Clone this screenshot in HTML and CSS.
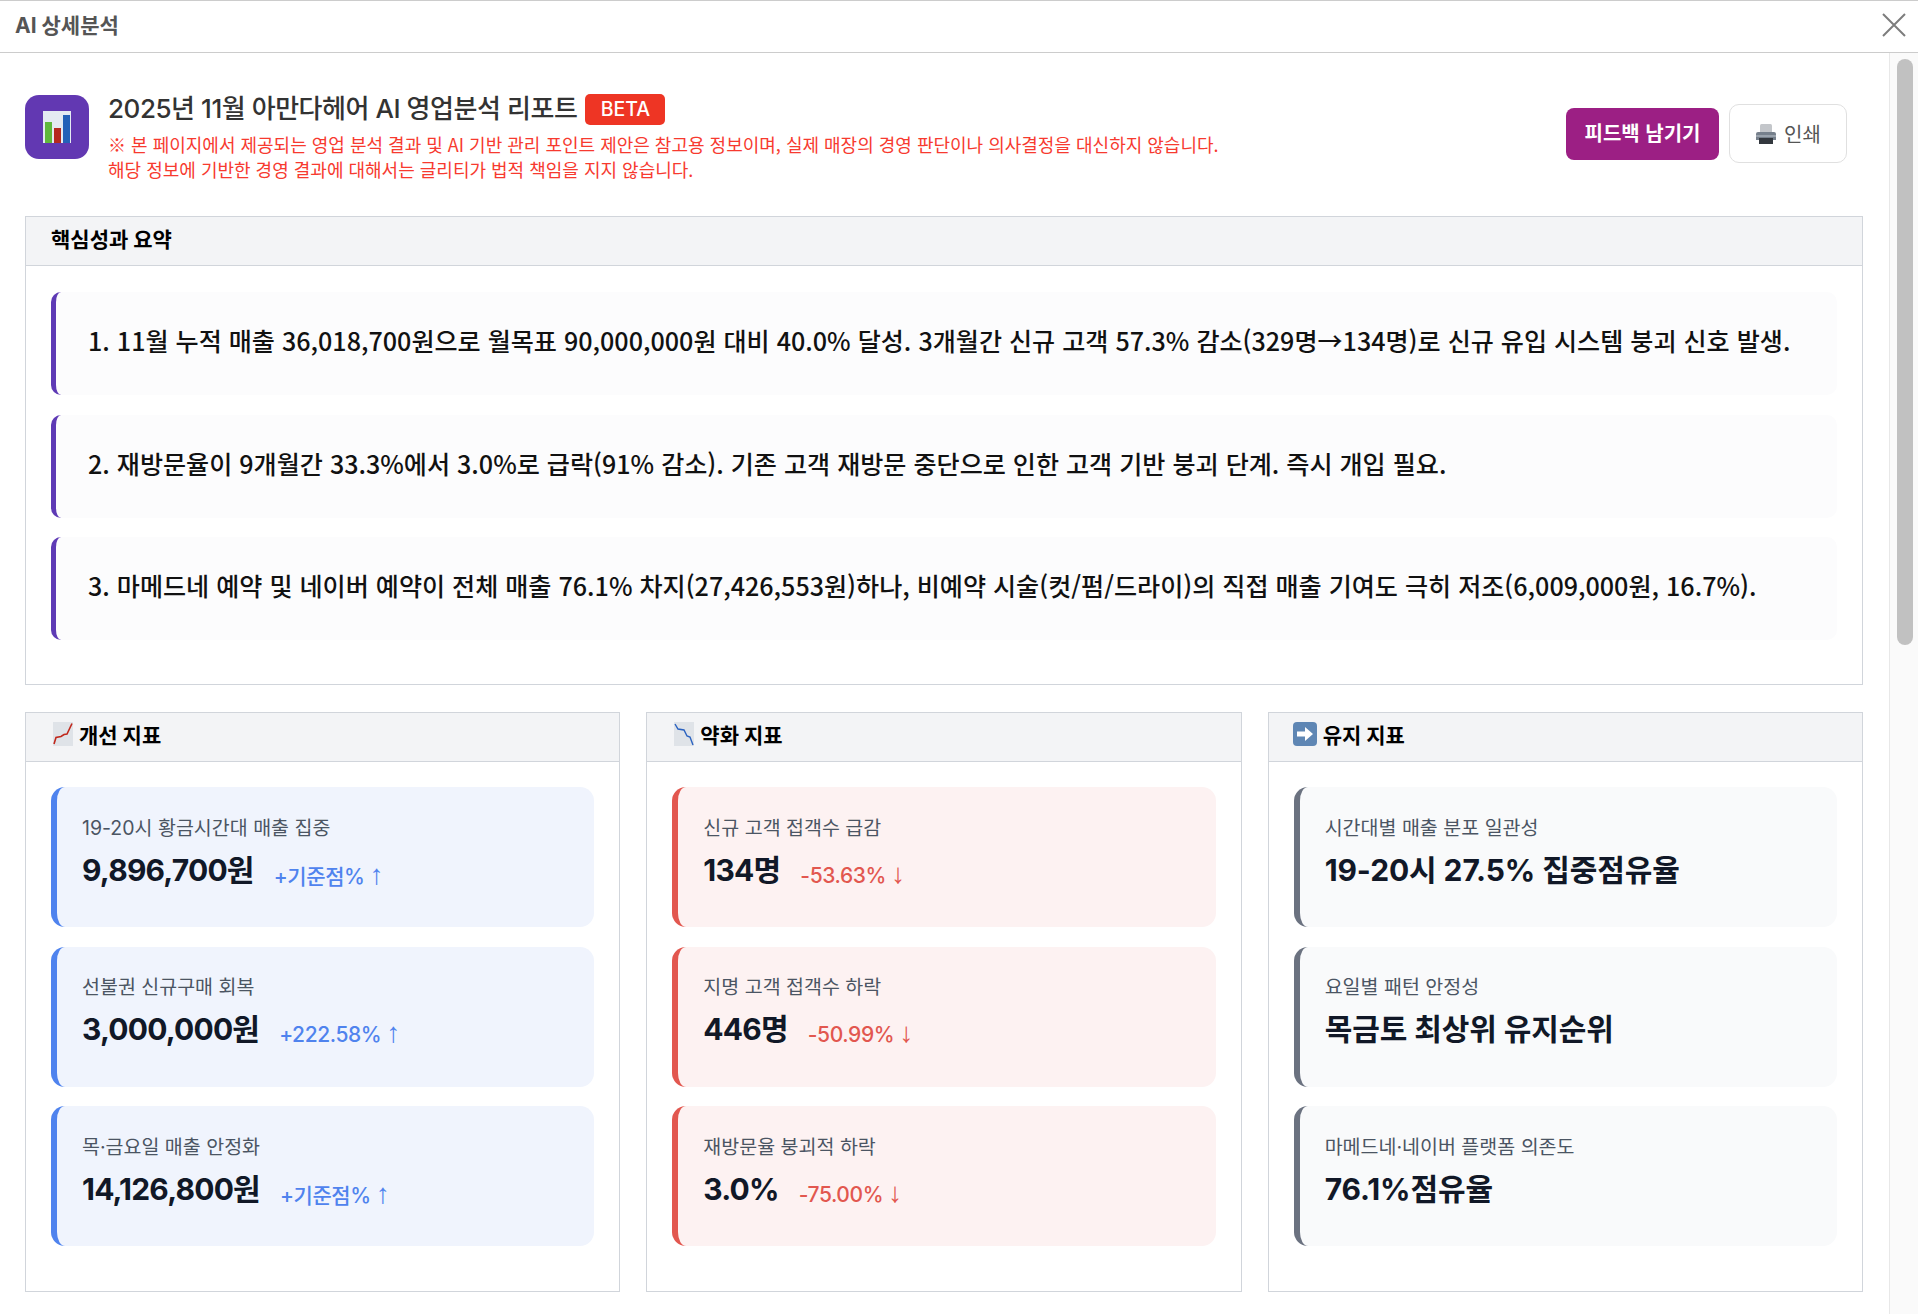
FILE: index.html
```html
<!DOCTYPE html>
<html lang="ko">
<head>
    <meta charset="UTF-8">
    <meta name="viewport" content="width=device-width, initial-scale=1.0">
    <title>AI 상세분석</title>
    <link rel="stylesheet" href="styles.css">
</head>
<body>
    <header class="modal-bar">
        <span class="modal-title">AI 상세분석</span>
        <svg class="close-icon" viewBox="0 0 24 24"><path d="M1 1L23 23M23 1L1 23"/></svg>
    </header>

    <div class="modal-body">
        <main class="report">
            <div class="report-head">
                <div class="report-icon">
                    <svg width="28" height="32" viewBox="0 0 28 32">
                        <rect width="28" height="32" fill="#e4eaf2"/>
                        <rect x="2" y="11" width="7" height="21" fill="#5fb83c"/>
                        <rect x="11" y="17" width="7" height="15" fill="#b5281f"/>
                        <rect x="20" y="4" width="7" height="28" fill="#2461b8"/>
                    </svg>
                </div>
                <div class="report-info">
                    <div class="report-title">
                        <h1>2025년 11월 아만다헤어 AI 영업분석 리포트</h1>
                        <span class="beta">BETA</span>
                    </div>
                    <p class="notice">※ 본 페이지에서 제공되는 영업 분석 결과 및 AI 기반 관리 포인트 제안은 참고용 정보이며, 실제 매장의 경영 판단이나 의사결정을 대신하지 않습니다.</p>
                    <p class="notice">해당 정보에 기반한 경영 결과에 대해서는 글리티가 법적 책임을 지지 않습니다.</p>
                </div>
                <div class="report-actions">
                    <button type="button" class="btn-feedback">피드백 남기기</button>
                    <button type="button" class="btn-print">
                        <svg width="22" height="22" viewBox="0 0 22 22">
                            <rect x="5" y="1" width="12" height="9" rx="1.5" fill="#c3c6ca"/>
                            <path d="M3 9h16a2 2 0 0 1 2 2v6H1v-6a2 2 0 0 1 2-2z" fill="#76808c"/>
                            <rect x="1" y="12" width="20" height="2" fill="#9aa3ad"/>
                            <rect x="4" y="15" width="14" height="6" fill="#33383e"/>
                        </svg>
                        인쇄
                    </button>
                </div>
            </div>

            <section class="panel panel-summary">
                <h2 class="panel-head">핵심성과 요약</h2>
                <div class="panel-body">
                    <div class="summary-item">1. 11월 누적 매출 36,018,700원으로 월목표 90,000,000원 대비 40.0% 달성. 3개월간 신규 고객 57.3% 감소(329명→134명)로 신규 유입 시스템 붕괴 신호 발생.</div>
                    <div class="summary-item">2. 재방문율이 9개월간 33.3%에서 3.0%로 급락(91% 감소). 기존 고객 재방문 중단으로 인한 고객 기반 붕괴 단계. 즉시 개입 필요.</div>
                    <div class="summary-item">3. 마메드네 예약 및 네이버 예약이 전체 매출 76.1% 차지(27,426,553원)하나, 비예약 시술(컷/펌/드라이)의 직접 매출 기여도 극히 저조(6,009,000원, 16.7%).</div>
                </div>
            </section>

            <div class="columns">
                <section class="panel">
                    <h2 class="panel-head">
                        <svg class="emoji" viewBox="0 0 20 24">
                            <rect width="20" height="24" fill="#dfe3e8"/>
                            <path d="M1 22L3 15.5L8 14.5L11 12.5L14 12L19 1.5" fill="none" stroke="#c0281c" stroke-width="1.6"/>
                        </svg>
                        개선 지표
                    </h2>
                    <div class="panel-body">
                        <div class="metric metric-up">
                            <div class="metric-label">19-20시 황금시간대 매출 집중</div>
                            <div class="metric-row"><span class="metric-value">9,896,700원</span><span class="metric-delta">+기준점% <span class="arrow">↑</span></span></div>
                        </div>
                        <div class="metric metric-up">
                            <div class="metric-label">선불권 신규구매 회복</div>
                            <div class="metric-row"><span class="metric-value">3,000,000원</span><span class="metric-delta">+222.58% <span class="arrow">↑</span></span></div>
                        </div>
                        <div class="metric metric-up">
                            <div class="metric-label">목·금요일 매출 안정화</div>
                            <div class="metric-row"><span class="metric-value">14,126,800원</span><span class="metric-delta">+기준점% <span class="arrow">↑</span></span></div>
                        </div>
                    </div>
                </section>

                <section class="panel">
                    <h2 class="panel-head">
                        <svg class="emoji" viewBox="0 0 20 24">
                            <rect width="20" height="24" fill="#dfe3e8"/>
                            <path d="M1 2L4 7L10 8L13 14L16 15L19 23" fill="none" stroke="#2a62c0" stroke-width="1.4"/>
                        </svg>
                        약화 지표
                    </h2>
                    <div class="panel-body">
                        <div class="metric metric-down">
                            <div class="metric-label">신규 고객 접객수 급감</div>
                            <div class="metric-row"><span class="metric-value">134명</span><span class="metric-delta">-53.63% <span class="arrow">↓</span></span></div>
                        </div>
                        <div class="metric metric-down">
                            <div class="metric-label">지명 고객 접객수 하락</div>
                            <div class="metric-row"><span class="metric-value">446명</span><span class="metric-delta">-50.99% <span class="arrow">↓</span></span></div>
                        </div>
                        <div class="metric metric-down">
                            <div class="metric-label">재방문율 붕괴적 하락</div>
                            <div class="metric-row"><span class="metric-value">3.0%</span><span class="metric-delta">-75.00% <span class="arrow">↓</span></span></div>
                        </div>
                    </div>
                </section>

                <section class="panel">
                    <h2 class="panel-head">
                        <svg class="emoji emoji-wide" viewBox="0 0 24 24">
                            <rect width="24" height="24" rx="4" fill="#5e86b4"/>
                            <path d="M4 9.5h8V5l8 7-8 7v-4.5H4z" fill="#fff"/>
                        </svg>
                        유지 지표
                    </h2>
                    <div class="panel-body">
                        <div class="metric metric-flat">
                            <div class="metric-label">시간대별 매출 분포 일관성</div>
                            <div class="metric-row"><span class="metric-value">19-20시 27.5% 집중점유율</span></div>
                        </div>
                        <div class="metric metric-flat">
                            <div class="metric-label">요일별 패턴 안정성</div>
                            <div class="metric-row"><span class="metric-value">목금토 최상위 유지순위</span></div>
                        </div>
                        <div class="metric metric-flat">
                            <div class="metric-label">마메드네·네이버 플랫폼 의존도</div>
                            <div class="metric-row"><span class="metric-value">76.1%점유율</span></div>
                        </div>
                    </div>
                </section>
            </div>
        </main>
        <div class="scrollbar"><div class="scrollbar-thumb"></div></div>
    </div>
</body>
</html>
```

FILE: styles.css
```css
html, body {
    margin: 0;
    height: 100%;
    overflow: hidden;
}
body {
    display: flex;
    flex-direction: column;
    background: #fff;
    font-family: Inter, "Noto Sans CJK KR", sans-serif;
    color: #111827;
}
h1, h2, p {
    margin: 0;
}

.modal-bar {
    flex: none;
    height: 53px;
    box-sizing: border-box;
    border-top: 1px solid #ccc;
    border-bottom: 1px solid #ccc;
    padding: 0 12px 6px 15px;
    display: flex;
    align-items: center;
    justify-content: space-between;
}
.modal-title {
    font-size: 21px;
    font-weight: 700;
    color: #555;
}
.close-icon {
    width: 24px;
    height: 24px;
    margin-top: 3px;
    stroke: #7d7d7d;
    stroke-width: 2;
    fill: none;
}

.modal-body {
    flex: 1;
    display: flex;
    min-height: 0;
}
.report {
    flex: 1;
    min-width: 0;
    padding: 42px 26px 0 25px;
}
.scrollbar {
    flex: none;
    width: 29px;
    box-sizing: border-box;
    background: #fafafa;
    border-left: 1px solid #e8e8e8;
    padding: 6px 5px 0 7px;
}
.scrollbar-thumb {
    height: 586px;
    background: #c1c1c1;
    border-radius: 8px;
}

.report-head {
    display: flex;
    align-items: flex-start;
    height: 121px;
}
.report-icon {
    flex: none;
    width: 64px;
    height: 64px;
    border-radius: 14px;
    background: #6238b2;
    display: flex;
    align-items: center;
    justify-content: center;
    margin-right: 19px;
}
.report-info {
    flex: 1;
    min-width: 0;
}
.report-title {
    display: flex;
    align-items: center;
    gap: 8px;
    height: 32px;
    margin-top: -2px;
    margin-bottom: 7px;
}
.report-title h1 {
    font-size: 26px;
    line-height: 28px;
    font-weight: 500;
    letter-spacing: -0.45px;
    color: #333;
}
.beta {
    background: #ee3524;
    color: #fff;
    font-size: 19.5px;
    font-weight: 500;
    border-radius: 5px;
    width: 80px;
    height: 31px;
    display: flex;
    align-items: center;
    justify-content: center;
}
.notice {
    font-family: "Noto Sans CJK KR", sans-serif;
    font-size: 18px;
    line-height: 25px;
    color: #f73a2f;
}
.report-actions {
    flex: none;
    display: flex;
    align-items: center;
    gap: 10px;
    margin: 9px 16px 0 0;
}
.btn-feedback {
    width: 153px;
    height: 52px;
    background: #9c1f84;
    color: #fff;
    border: none;
    border-radius: 8px;
    padding-bottom: 4px;
    font: 700 20px "Noto Sans CJK KR", sans-serif;
}
.btn-print {
    width: 118px;
    height: 59px;
    background: #fff;
    color: #555;
    border: 1px solid #e0e0e0;
    border-radius: 10px;
    font: 400 20px "Noto Sans CJK KR", sans-serif;
    display: flex;
    align-items: center;
    justify-content: center;
    gap: 7px;
}

.panel {
    border: 1px solid #d1d5db;
    background: #fff;
}
.panel-head {
    height: 49px;
    box-sizing: border-box;
    background: #f3f4f6;
    border-bottom: 1px solid #d1d5db;
    padding: 0 0 7px 25px;
    font-size: 21px;
    font-weight: 700;
    color: #000;
    display: flex;
    align-items: center;
    gap: 6px;
}
.panel-body {
    padding: 25px 25px 45px;
    display: flex;
    flex-direction: column;
    gap: 19.5px;
}
.panel-summary {
    margin-bottom: 27px;
}
.panel-summary .panel-body {
    padding: 26px 25px 44px;
}

.summary-item {
    height: 103px;
    box-sizing: border-box;
    background: #fcfcfd;
    border-left: 5px solid #5e3ab5;
    border-radius: 10px;
    padding: 0 0 7px 32px;
    display: flex;
    align-items: center;
    font-family: "Noto Sans CJK KR", sans-serif;
    font-size: 25.1px;
    font-weight: 500;
    color: #111;
    white-space: nowrap;
}

.columns {
    display: grid;
    grid-template-columns: repeat(3, 1fr);
    gap: 26px;
}
.columns .panel-head {
    padding-left: 27px;
}
.emoji {
    width: 20px;
    height: 24px;
    flex: none;
}
.emoji-wide {
    width: 24px;
    margin-left: -3px;
}

.metric {
    height: 140px;
    box-sizing: border-box;
    border-left: 6px solid;
    border-radius: 14px;
    padding: 26.5px 0 0 25px;
}
.metric-up {
    background: #f0f4fd;
    border-color: #4f83ee;
}
.metric-down {
    background: #fdf2f2;
    border-color: #e2574f;
}
.metric-flat {
    background: #f9fafb;
    border-color: #6b7280;
}
.metric-label {
    font-size: 19.5px;
    line-height: 28px;
    color: #4b5563;
}
.metric-row {
    display: flex;
    align-items: center;
    gap: 20px;
    margin-top: 6px;
}
.metric-value {
    font-size: 30px;
    line-height: 44px;
    font-weight: 700;
    letter-spacing: -0.8px;
    color: #111827;
}
.metric-flat .metric-value {
    letter-spacing: -0.1px;
}
.metric-delta {
    font-size: 21px;
    font-weight: 500;
    letter-spacing: -0.4px;
    margin-top: 11px;
}
.arrow {
    font-family: "Liberation Sans", sans-serif;
    font-size: 28px;
    line-height: 0;
}
.metric-up .metric-delta {
    color: #4f83ee;
}
.metric-down .metric-delta {
    color: #e2574f;
}
```
